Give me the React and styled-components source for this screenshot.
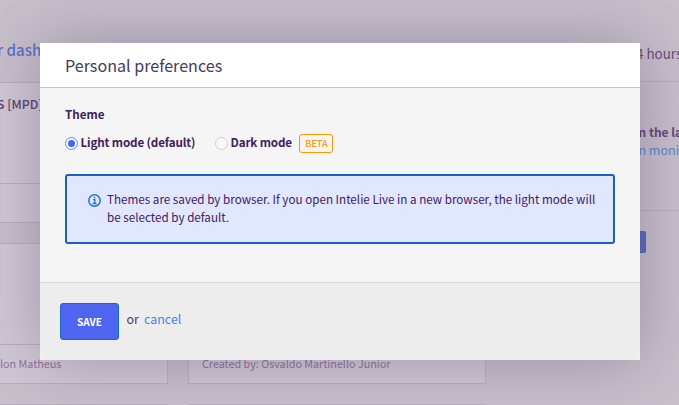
import React from "react";
import styled, { createGlobalStyle } from "styled-components";

const GlobalStyle = createGlobalStyle`
  * { box-sizing: border-box; }
  html, body { margin: 0; height: 100%; overflow: hidden; background: #c8bfcb; }
  body {
    font-family: "Noto Sans CJK SC", "Noto Sans", sans-serif;
    font-size: 11.66px;
    line-height: 18px;
    color: #3d2f5c;
  }
`;

const Page = styled.div`
  position: relative;
  width: 679px;
  height: 405px;
  overflow: hidden;
  background: #c8bfcb;
`;

const Dashboard = styled.div`
  display: grid;
  grid-template-columns: 486px 1fr;
  height: 405px;
`;

const Listing = styled.main`
  display: flex;
  flex-direction: column;
  height: 405px;
  overflow: hidden;
`;

const ListingTitle = styled.h1`
  flex: none;
  height: 82px;
  margin: 0 0 0 -3px;
  padding-top: 37px;
  font-size: 15.1px;
  font-weight: 500;
  line-height: 24px;
  color: #5c70cb;
  white-space: nowrap;
`;

const CardGrid = styled.div`
  display: grid;
  grid-template-columns: 298px 298px;
  grid-auto-rows: 141px;
  gap: 20px;
  margin-left: -130px;
`;

const Card = styled.article`
  display: grid;
  grid-template-rows: 1fr 39px;
  border: 1px solid #b8afbd;
  background: #d0c8d5;
`;

const CardTitle = styled.h2`
  margin: 0;
  padding: 12px 0 0 ${(p) => p.$indent}px;
  font-size: 12.3px;
  font-weight: 500;
  line-height: 18px;
  color: #62406f;
  white-space: nowrap;
`;

const CardFooter = styled.footer`
  padding: 9px 0 0 ${(p) => p.$indent || 13}px;
  border-top: 1px solid #b8afbd;
  font-size: 10.78px;
  line-height: 18px;
  color: #8f7298;
  white-space: nowrap;
`;

const Sidebar = styled.aside`
  display: flex;
  flex-direction: column;
  padding-left: 149px;
  white-space: nowrap;
  overflow: hidden;
`;

const Period = styled.div`
  height: 82px;
  padding: 43px 0 0 1px;
  border-bottom: 1px solid #b8afbd;
  font-size: 13.4px;
  line-height: 20px;
  color: #674b80;
`;

const Summary = styled.div`
  height: 129px;
  padding-top: 41px;
  border-bottom: 1px solid #b8afbd;
`;

const SummaryHeading = styled.div`
  font-size: 11.9px;
  font-weight: 700;
  color: #67447b;
`;

const SummaryLink = styled.div`
  font-size: 12.5px;
  color: #5b86cc;
`;

const SidebarButton = styled.div`
  width: 11px;
  height: 22px;
  margin-top: 20px;
  border: 1px solid #446bb5;
  border-radius: 2px;
  background: #5b6bc0;
`;

const Dialog = styled.section`
  position: absolute;
  top: 43px;
  left: 40px;
  display: flex;
  flex-direction: column;
  width: 600px;
  height: 317px;
  background: #f5f5f5;
  box-shadow: 0 0 60px rgba(60, 52, 88, 0.34);
`;

const DialogHeader = styled.header`
  height: 45px;
  padding: 10px 25px 0;
  border-bottom: 1px solid #c6c2d3;
  background: #fff;
  font-size: 16.1px;
  line-height: 24px;
  color: #443a60;
`;

const DialogBody = styled.div`
  flex: 1;
  padding: 17px 25px 0;
  color: #40205f;
`;

const FieldLabel = styled.div`
  font-weight: 700;
  line-height: 18px;
`;

const Options = styled.div`
  display: flex;
  align-items: center;
  height: 20px;
  margin-top: 10px;
`;

const Option = styled.label`
  display: flex;
  align-items: center;
  gap: 2.5px;
  width: ${(p) => p.$width}px;
  font-weight: 700;
  letter-spacing: -0.15px;
  white-space: nowrap;
`;

const OptionText = styled.span`
  padding-bottom: 2px;
`;

const Radio = styled.span`
  display: flex;
  flex: none;
  align-items: center;
  justify-content: center;
  width: 13px;
  height: 13px;
  border: 1px solid ${(p) => (p.$checked ? "#5b8cec" : "#cfcfcf")};
  border-radius: 50%;
  background: #f8f8f8;

  &::after {
    content: "";
    width: 7px;
    height: 7px;
    border-radius: 50%;
    background: ${(p) => (p.$checked ? "#4d65ec" : "transparent")};
  }
`;

const Badge = styled.span`
  display: flex;
  align-items: center;
  justify-content: center;
  width: 34px;
  height: 19px;
  padding-left: 1px;
  border: 1px solid #ff9800;
  border-radius: 3px;
  font-size: 9.1px;
  font-weight: 500;
  line-height: 17px;
  color: #ff9800;
`;

const Notice = styled.div`
  display: flex;
  gap: 6px;
  height: 70px;
  margin-top: 21px;
  padding: 14px 0 0 21px;
  border: 2px solid #1a5fc4;
  border-radius: 3px;
  background: #e0e7ff;
`;

const NoticeIcon = styled.svg`
  flex: none;
  width: 13px;
  height: 13px;
  margin-top: 4px;
`;

const NoticeText = styled.p`
  margin: 0;
  white-space: nowrap;
`;

const DialogFooter = styled.footer`
  display: flex;
  height: 78px;
  padding: 20px 20px 0;
  border-top: 1px solid #dadada;
  border-radius: 0 0 3px 3px;
  background: #ededed;
`;

const SaveButton = styled.button`
  width: 59px;
  height: 37px;
  padding: 1px 0 0;
  border: 1px solid #1769c9;
  border-radius: 3px;
  background: #4f65f0;
  color: #fff;
  font: 700 10px/16px "Noto Sans CJK SC", "Noto Sans", sans-serif;
`;

const Alternative = styled.span`
  padding: 7px 0 0 7.5px;
  font-size: 12.5px;
  line-height: 18px;
  color: #493d62;
`;

const CancelLink = styled.a`
  margin-left: 5px;
  color: #4a82e8;
`;

function InfoIcon() {
  return (
    <NoticeIcon viewBox="0 0 13 13" fill="none" stroke="#1976d2">
      <circle cx="6.5" cy="6.5" r="5.7" strokeWidth="1.5" />
      <path d="M5 5.7h1.8v3.8M4.6 9.5h3.9" strokeWidth="1.3" />
      <path d="M5.7 3.6h1.5" strokeWidth="1.5" />
    </NoticeIcon>
  );
}

export default function App() {
  return (
    <Page>
      <GlobalStyle />
      <Dashboard>
        <Listing>
          <ListingTitle>r dash</ListingTitle>
          <CardGrid>
            <Card>
              <CardTitle $indent={126}>S [MPD]</CardTitle>
              <CardFooter />
            </Card>
            <Card>
              <span />
              <CardFooter />
            </Card>
            <Card>
              <span />
              <CardFooter $indent={129}>lon Matheus</CardFooter>
            </Card>
            <Card>
              <span />
              <CardFooter>Created by: Osvaldo Martinello Junior</CardFooter>
            </Card>
            <Card />
            <Card />
          </CardGrid>
        </Listing>
        <Sidebar>
          <Period>4 hours</Period>
          <Summary>
            <SummaryHeading>in the last</SummaryHeading>
            <SummaryLink>in moni</SummaryLink>
          </Summary>
          <SidebarButton />
        </Sidebar>
      </Dashboard>
      <Dialog role="dialog" aria-label="Personal preferences">
        <DialogHeader>Personal preferences</DialogHeader>
        <DialogBody>
          <FieldLabel>Theme</FieldLabel>
          <Options>
            <Option $width={150}>
              <Radio $checked />
              <OptionText>Light mode (default)</OptionText>
            </Option>
            <Option $width={84}>
              <Radio />
              <OptionText>Dark mode</OptionText>
            </Option>
            <Badge>BETA</Badge>
          </Options>
          <Notice>
            <InfoIcon />
            <NoticeText>
              Themes are saved by browser. If you open Intelie Live in a new browser, the light mode will
              <br />
              be selected by default.
            </NoticeText>
          </Notice>
        </DialogBody>
        <DialogFooter>
          <SaveButton>SAVE</SaveButton>
          <Alternative>
            or
            <CancelLink>cancel</CancelLink>
          </Alternative>
        </DialogFooter>
      </Dialog>
    </Page>
  );
}
